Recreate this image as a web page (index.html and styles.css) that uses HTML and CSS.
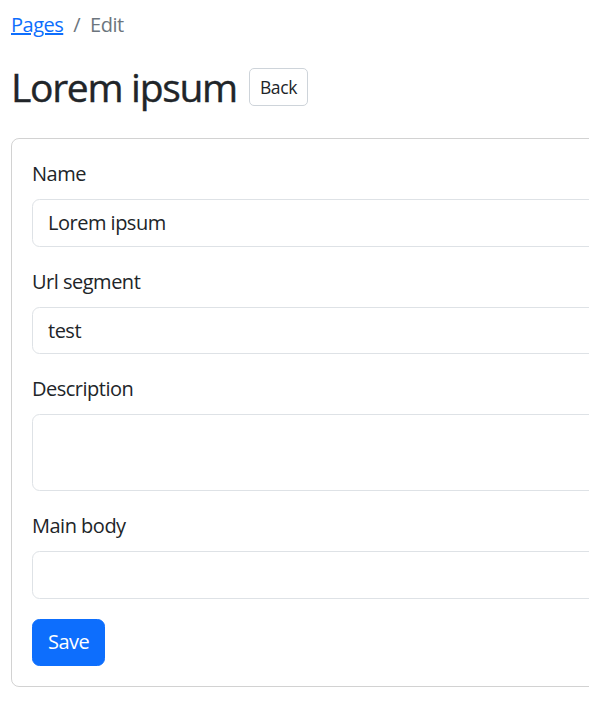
FILE: index.html
```html
<!DOCTYPE html>
<html lang="en">
<head>
<meta charset="utf-8">
<title>Edit page</title>
<link rel="stylesheet" href="styles.css">
</head>
<body>
<main class="page">
  <nav class="breadcrumb">
    <a href="#" class="crumb-link">Pages</a>
    <span class="crumb-sep">/</span>
    <span class="crumb-current">Edit</span>
  </nav>
  <div class="title-row">
    <h1 class="title">Lorem ipsum</h1>
    <button class="btn-back" type="button">Back</button>
  </div>
  <form class="card">
    <div class="field">
      <label class="label">Name</label>
      <input class="control" type="text" value="Lorem ipsum">
    </div>
    <div class="field">
      <label class="label">Url segment</label>
      <input class="control" type="text" value="test">
    </div>
    <div class="field">
      <label class="label">Description</label>
      <textarea class="control area"></textarea>
    </div>
    <div class="field">
      <label class="label">Main body</label>
      <input class="control" type="text" value="">
    </div>
    <button class="btn-save" type="button">Save</button>
  </form>
</main>
</body>
</html>
```

FILE: styles.css
```css
html, body {
  margin: 0;
  overflow: hidden;
}
body {
  font-family: "Open Sans", "Noto Sans", sans-serif;
  font-size: 20px;
  line-height: 30px;
  letter-spacing: -0.5px;
  color: #212529;
  background: #fff;
}
.page {
  padding: 10px 0 0 11px;
  width: 720px;
}
.breadcrumb {
  display: flex;
  align-items: center;
  height: 30px;
  margin-bottom: 23px;
}
.crumb-link {
  color: #0d6efd;
  text-decoration: underline;
}
.crumb-sep {
  color: #6c757d;
  padding: 0 10px;
}
.crumb-current {
  color: #6c757d;
}
.title-row {
  display: flex;
  align-items: center;
  gap: 12px;
  margin-bottom: 27px;
}
.title {
  margin: 0;
  font-size: 39px;
  line-height: 48px;
  font-weight: 500;
  letter-spacing: -1.3px;
  -webkit-text-stroke: 0.4px #212529;
}
.btn-back {
  font-family: inherit;
  font-size: 17.5px;
  letter-spacing: -0.4px;
  line-height: 26px;
  padding: 5px 10px;
  color: #212529;
  background: #fff;
  border: 1px solid #ced4da;
  border-radius: 5px;
}
.card {
  display: flex;
  flex-direction: column;
  align-items: flex-start;
  border: 1px solid rgba(0,0,0,.175);
  border-radius: 8px;
  padding: 20px;
  width: 680px;
}
.field {
  display: flex;
  flex-direction: column;
  align-self: stretch;
  margin-bottom: 20px;
}
.label {
  display: block;
  margin-bottom: 10px;
}
.control {
  box-sizing: border-box;
  font-family: inherit;
  font-size: 20px;
  letter-spacing: -0.5px;
  line-height: 30px;
  color: #212529;
  height: 47.5px;
  padding: 7.5px 15px;
  border: 1px solid #dee2e6;
  border-radius: 7.5px;
  background: #fff;
  width: 100%;
}
.area {
  height: 77px;
  resize: none;
}
.btn-save {
  font-family: inherit;
  font-size: 20px;
  letter-spacing: -0.5px;
  line-height: 30px;
  padding: 7.5px 15px;
  color: #fff;
  background: #0d6efd;
  border: 1px solid #0d6efd;
  border-radius: 7.5px;
}
```
